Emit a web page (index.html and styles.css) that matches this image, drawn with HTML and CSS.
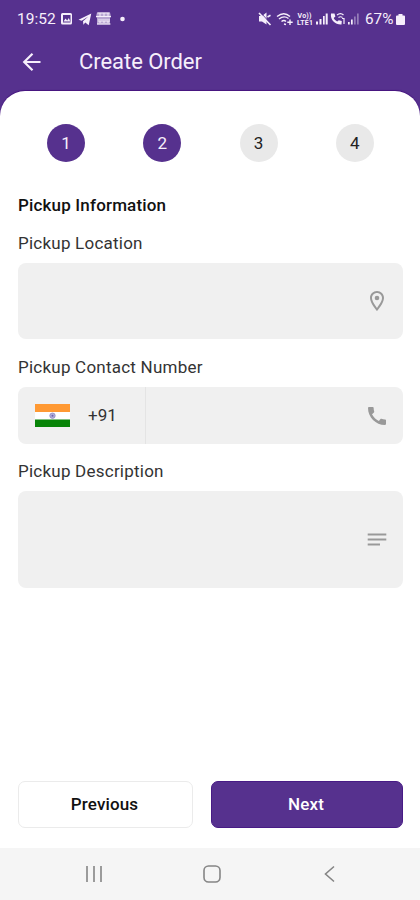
FILE: index.html
```html
<!DOCTYPE html>
<html lang="en">
<head>
<meta charset="utf-8">
<title>Create Order</title>
<link rel="stylesheet" href="styles.css">
</head>
<body>
<div class="screen">
  <header class="top">
    <div class="status">
      <span class="clock">19:52</span>
      <svg class="status-left" width="66" height="16" viewBox="0 0 66 16">
        <path fill="currentColor" fill-rule="evenodd" d="M2.500 2h8a1.500 1.500 0 0 1 1.500 1.500v8.500a1.500 1.500 0 0 1-1.500 1.500h-8a1.500 1.500 0 0 1-1.500-1.500v-8.500a1.500 1.500 0 0 1 1.500-1.500zM3 4v7.500h7.500V4zM3.500 10.500l2-3 1.700 1.900 1.600-2.400 1.500 3.500z"/>
        <path fill="currentColor" d="M18.500 8.800L31.300 2.500 28.700 14.200 25.300 11.500 23.400 13.800 23 10.300 28.300 5.500 21.700 9.700z"/>
        <path fill="currentColor" opacity=".62" d="M37 1.500h13l1 4.500-1 1v6.500H37V7l-1-1z"/>
        <path fill="none" stroke="currentColor" stroke-width="1" d="M37.500 2h12M36 5.500h15M37 13h13.500M39 8v3h2V8M43 8v3h2V8M47 8v3h2V8M40 2v3M44 2v3M48 2v3"/>
        <circle fill="currentColor" cx="62.500" cy="8" r="2.300"/>
      </svg>
      <svg class="status-right" width="102" height="16" viewBox="0 0 102 16">
        <path fill="currentColor" d="M1 5h3L8.500 1.500v12L4 10.500H1z"/>
        <path fill="none" stroke="#56318e" stroke-width="1" d="M2.500 1.500l10 11"/>
        <path fill="none" stroke="currentColor" stroke-width="1.600" d="M1 2l11.500 12M9.500 6l3-1.700"/>
        <g fill="none" stroke="currentColor" stroke-width="1.400">
          <path d="M19 5.500q7-5.500 13 0M21 8q5-4 9.500-.5M23.500 10.500q2.500-2 4.500 0"/>
          <path d="M32 8.500v5.500M29.300 11.200h5.400M26 13l2 .5"/>
        </g>
        <g class="tiny" fill="currentColor">
          <text x="39.500" y="7" textLength="14">Vo))</text>
          <text x="39" y="13.500" textLength="16">LTE1</text>
        </g>
        <g fill="currentColor">
          <path d="M58 10.500h2v3h-2zM61.500 8h2v5.500h-2zM65 5h1.700v8.500H65zM67.700 2.500h2v11h-2z"/>
          <path d="M73 2.500l3.500.1.900 3-1.700 1.500c.8 1.700 1.900 2.600 3.500 3.400l1.600-1.200 3 .8-.3 3.400C78 14 72 9.500 73 2.500z"/>
          <path d="M90 11h1.700v2.500H90zM93 8.500h1.700v5H93z"/>
          <path opacity=".4" d="M96 5.500h1.700v8H96zM99 2.500h1.700v11H99z"/>
        </g>
        <path fill="none" stroke="currentColor" stroke-width="1.200" d="M79 4q3.500-2.800 6.500 0M80.500 6.500q2-1.500 4 0M86 7v6M84 7.500h2.500"/>
      </svg>
      <span class="percent">67%</span>
      <svg class="battery" width="9" height="13" viewBox="0 0 9 13"><path fill="currentColor" d="M2.500 1h4v1.500H8A1 1 0 0 1 9 3.500V11a1 1 0 0 1-1 1H1a1 1 0 0 1-1-1V3.500a1 1 0 0 1 1-1h1.500z"/></svg>
    </div>
    <div class="appbar">
      <svg width="20" height="20" viewBox="0 0 20 20" fill="none" stroke="currentColor" stroke-width="2.200"><path d="M18.500 10H2.500M10.500 1.700L2.200 10l8.300 8.300"/></svg>
      <h1>Create Order</h1>
    </div>
  </header>
  <main class="sheet">
    <div class="steps">
      <span class="step done">1</span>
      <span class="step done">2</span>
      <span class="step">3</span>
      <span class="step">4</span>
    </div>
    <h2>Pickup Information</h2>
    <div class="label location">Pickup Location</div>
    <div class="field field-location">
      <svg width="24" height="24" viewBox="0 0 24 24" fill="currentColor"><path d="M12 2C8.130 2 5 5.130 5 9c0 5.250 7 13 7 13s7-7.750 7-13c0-3.870-3.130-7-7-7zM7 9c0-2.760 2.240-5 5-5s5 2.240 5 5c0 2.880-2.880 7.190-5 9.880C9.920 16.210 7 11.850 7 9z"/><circle cx="12" cy="9" r="2.300"/></svg>
    </div>
    <div class="label contact">Pickup Contact Number</div>
    <div class="field field-contact">
      <div class="country">
        <svg width="35" height="23" viewBox="0 0 35 23"><path fill="#fff" d="M0 0h35v23H0z"/><path fill="#ff9933" d="M0 0h35v8H0z"/><path fill="#088408" d="M0 15.500h35V23H0z"/><circle cx="17.500" cy="11.700" r="2.700" fill="#b5b0da" stroke="#8c86c2" stroke-width=".8"/><circle cx="17.500" cy="11.700" r="1" fill="#6a64ae"/></svg>
        <span>+91</span>
      </div>
      <svg width="24" height="24" viewBox="0 0 24 24" fill="currentColor"><path d="M20.010 15.380c-1.230 0-2.420-.2-3.530-.56-.35-.12-.74-.03-1.010.24l-1.570 1.970c-2.830-1.350-5.480-3.900-6.890-6.830l1.950-1.660c.27-.28.35-.67.24-1.020-.37-1.110-.56-2.300-.56-3.530 0-.54-.45-.99-.99-.99H4.190C3.650 3 3 3.240 3 3.990 3 13.280 10.730 21 20.010 21c.71 0 .99-.63.99-1.180v-3.450c0-.54-.45-.99-.99-.99z"/></svg>
    </div>
    <div class="label description">Pickup Description</div>
    <div class="field field-description">
      <svg width="24" height="24" viewBox="0 0 24 24" fill="none" stroke="currentColor" stroke-width="2"><path d="M2.700 6.500h18.600M2.700 11.500h18.600M2.700 16.500h12.300"/></svg>
    </div>
    <div class="actions">
      <button class="previous">Previous</button>
      <button class="next">Next</button>
    </div>
  </main>
  <nav class="navbar">
    <svg width="18" height="18" viewBox="0 0 18 18"><path d="M2 1v16M9 1v16M16 1v16"/></svg>
    <svg width="18" height="18" viewBox="0 0 18 18"><rect x="1" y="1" width="16" height="16" rx="4.500"/></svg>
    <svg width="18" height="18" viewBox="0 0 18 18"><path d="M14 1.500L5.500 9l8.500 7.500"/></svg>
  </nav>
</div>
</body>
</html>
```
FILE: styles.css
```css
* { box-sizing: border-box; }
body { margin: 0; font-family: Roboto, "Liberation Sans", sans-serif; color: #111; }
.screen { width: 420px; height: 900px; display: flex; flex-direction: column; background: linear-gradient(#56318e 0 150px, #fff 150px); }
.top { height: 90px; flex: none; color: #f6effb; }
.status { height: 37px; padding: 1px 15px 0 17px; display: flex; align-items: center; }
.clock, .percent { font-size: 15.5px; }
.clock { width: 43px; }
.percent { font-size: 15.3px; margin-left: 5px; width: 30px; }
.status-right { margin-left: auto; }
.battery { margin-left: 1px; }
.tiny { font-size: 7px; font-weight: 700; }
.appbar { height: 49px; padding: 0 22px; display: flex; align-items: center; gap: 37px; }
h1 { margin: 1px 0 0; font-size: 22px; font-weight: 400; line-height: 26px; letter-spacing: -0.05px; }
.sheet { flex: 1; padding: 33px 17px 20px 18px; margin-top: 1px; background: #fff; border-radius: 25px 25px 0 0; box-shadow: 0 -1px 1px #46147f; display: flex; flex-direction: column; }
.steps { display: grid; grid-template-columns: repeat(4, 1fr); justify-items: center; }
.step { width: 38px; height: 38px; border-radius: 50%; background: #e9e9e9; display: grid; place-items: center; font-size: 17px; color: #222; }
.step.done { background: #56318e; color: #f6effb; }
h2 { margin: 33px 0 0; font-size: 17px; line-height: 20px; font-weight: 500; letter-spacing: 0.17px; }
.label { font-size: 17px; line-height: 20px; color: #333; letter-spacing: 0.23px; }
.location { margin-top: 18px; }
.contact, .description { margin-top: 18px; }
.field { border-radius: 8px; background: #f0f0f0; display: flex; align-items: center; justify-content: flex-end; padding-right: 14px; color: #999; }
.field-location { margin-top: 10px; height: 76px; }
.field-contact { margin-top: 10px; height: 57px; justify-content: space-between; }
.description { margin-top: 17px; }
.field-description { margin-top: 10px; height: 97px; }
.country { height: 100%; width: 128px; padding: 0 0 2px 17px; border-right: 1px solid #e4e4e4; display: flex; align-items: center; gap: 18px; font-size: 17px; color: #333; }
.country svg { margin-top: 1px; }
.actions { margin-top: auto; display: grid; grid-template-columns: 175px 192px; gap: 18px; }
button { height: 47px; border-radius: 7px; font: 500 17px Roboto, "Liberation Sans", sans-serif; letter-spacing: 0.13px; padding: 0 2px 2px 0; }
.previous { background: #fff; border: 1px solid #ebebeb; color: #111; }
.next { background: #56318e; border: 1px solid #481b86; color: #fff; }
.navbar { height: 52px; flex: none; background: #f5f5f5; display: flex; align-items: center; justify-content: center; gap: 99.5px; padding-left: 3px; }
.navbar svg { fill: none; stroke: #858585; stroke-width: 1.6; }
```
